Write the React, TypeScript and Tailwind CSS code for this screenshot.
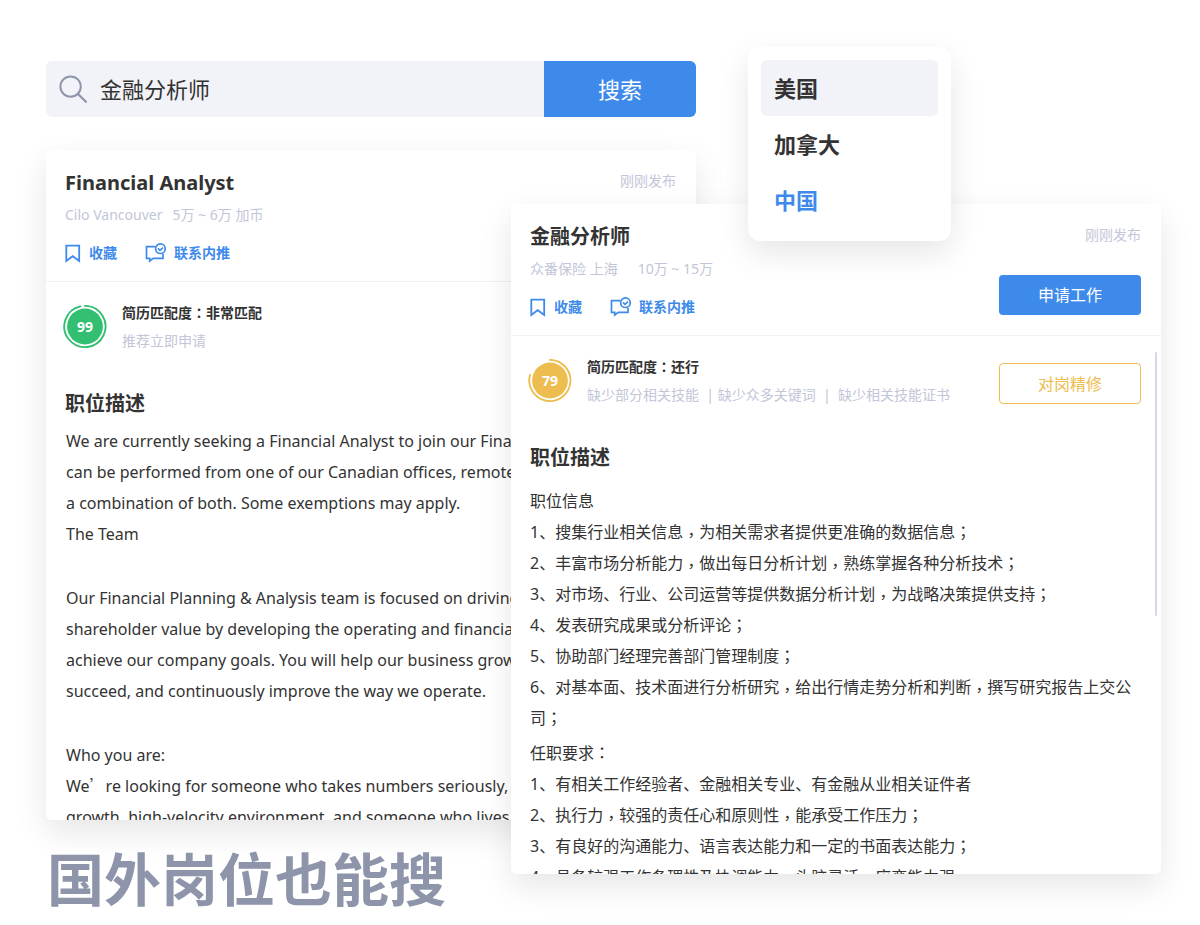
import type { ReactNode } from "react";

/** Sets full-width commas, colons and semicolons centred in the em box, and quotes at full width. */
function Cjk({ text }: { text: string }) {
  return (
    <>
      {text.split(/([，：；’])/).map((part, i) => {
        if (i % 2 === 0) return part;
        if (part === "’") {
          return (
            <span key={i} className="font-['Noto_Sans_CJK_SC',sans-serif] leading-none font-light">
              {part}
            </span>
          );
        }
        return (
          <span
            key={i}
            lang="zh-TW"
            className={
              part === "，"
                ? "align-[-3px] font-['Noto_Sans_CJK_TC',sans-serif] leading-none"
                : "font-['Noto_Sans_CJK_TC',sans-serif] leading-none"
            }
          >
            {part}
          </span>
        );
      })}
    </>
  );
}

function SearchIcon() {
  return (
    <svg className="size-7 shrink-0" viewBox="0 0 28 28" fill="none" stroke="#8e95ab" strokeWidth="2" aria-hidden="true">
      <circle cx="11.6" cy="11.6" r="10.2" />
      <path d="M18.8 18.8 27.5 27.4" strokeWidth="2.2" />
    </svg>
  );
}

function BookmarkIcon() {
  return (
    <svg className="h-5 w-4" viewBox="0 0 16 20" fill="none" stroke="currentColor" strokeWidth="1.8" aria-hidden="true">
      <path d="M1.3 2.6H14.2V18L7.7 13.2 1.3 18Z" />
    </svg>
  );
}

function ReferIcon() {
  return (
    <svg className="h-5 w-[21px]" viewBox="0 0 21 20" fill="none" stroke="currentColor" strokeWidth="1.7" aria-hidden="true">
      <path d="M10 3.6H1.5V15.4H4.7V18L8.2 15.4H18V11" />
      <circle cx="15.4" cy="5.7" r="4.8" />
      <path d="M12.9 5.4 15 7.4 18 4.6" strokeWidth="1.5" />
    </svg>
  );
}

function Score({ value, arc, color }: { value: number; arc: string; color: string }) {
  return (
    <div className="grid size-11 shrink-0 place-items-center">
      <svg className="col-start-1 row-start-1 size-11" viewBox="0 0 44 44" aria-hidden="true">
        <circle cx="22" cy="21.5" r="17.9" fill={color} />
        <path d={arc} fill="none" stroke={color} strokeWidth="1.9" strokeLinecap="round" />
      </svg>
      <span className="col-start-1 row-start-1 text-sm font-bold text-white">{value}</span>
    </div>
  );
}

type CardProps = {
  title: string;
  company: ReactNode;
  salary: string;
  match: string;
  hint: ReactNode;
  score: ReactNode;
  apply?: ReactNode;
  polish?: ReactNode;
  children: ReactNode;
};

function JobCard({ title, company, salary, match, hint, score, apply, polish, children }: CardProps) {
  return (
    <article className="relative h-[670px] overflow-hidden rounded-md bg-white">
      <header className="flex justify-between border-b border-[#f1f1f3] pt-[17px] pr-5 pb-[18px] pl-[19px]">
        <div>
          <h2 className="text-xl leading-8 font-bold">{title}</h2>
          <p className="mt-[6px] flex text-sm leading-5 whitespace-pre text-[#c2c6d8]">
            {company}
            <span>{salary}</span>
          </p>
          <div className="mt-[18px] flex gap-7 text-sm leading-5 font-bold text-[#3e8aeb]">
            <button type="button" className="flex items-center gap-2">
              <BookmarkIcon />
              收藏
            </button>
            <button type="button" className="flex items-center gap-2">
              <ReferIcon />
              联系内推
            </button>
          </div>
        </div>
        <div className="flex flex-col items-end pt-1">
          <time className="text-sm leading-5 text-[#c2c6d8]">刚刚发布</time>
          {apply}
        </div>
      </header>
      <div className="flex items-start justify-between pt-[17px] pr-5 pl-[17px]">
        <div className="flex items-center gap-[15px]">
          {score}
          <div className="text-sm leading-7">
            <p className="font-bold">
              <Cjk text={match} />
            </p>
            <p className="whitespace-pre text-[#c2c6d8]">{hint}</p>
          </div>
        </div>
        {polish}
      </div>
      <h3 className="mt-[33px] px-[19px] text-xl leading-8 font-bold">职位描述</h3>
      {children}
    </article>
  );
}

const englishBody = [
  [
    "We are currently seeking a Financial Analyst to join our Finance",
    "can be performed from one of our Canadian offices, remotely, or",
    "a combination of both. Some exemptions may apply.",
    "The Team",
  ],
  [
    "Our Financial Planning & Analysis team is focused on driving",
    "shareholder value by developing the operating and financial",
    "achieve our company goals. You will help our business grow,",
    "succeed, and continuously improve the way we operate.",
  ],
  [
    "Who you are:",
    "We’re looking for someone who takes numbers seriously,",
    "growth, high-velocity environment, and someone who lives",
  ],
];

const chineseBody = [
  {
    heading: "职位信息",
    items: [
      "1、搜集行业相关信息，为相关需求者提供更准确的数据信息；",
      "2、丰富市场分析能力，做出每日分析计划，熟练掌握各种分析技术；",
      "3、对市场、行业、公司运营等提供数据分析计划，为战略决策提供支持；",
      "4、发表研究成果或分析评论；",
      "5、协助部门经理完善部门管理制度；",
      "6、对基本面、技术面进行分析研究，给出行情走势分析和判断，撰写研究报告上交公司；",
    ],
  },
  {
    heading: "任职要求：",
    items: [
      "1、有相关工作经验者、金融相关专业、有金融从业相关证件者",
      "2、执行力，较强的责任心和原则性，能承受工作压力；",
      "3、有良好的沟通能力、语言表达能力和一定的书面表达能力；",
      "4、具备较强工作条理性及协调能力，头脑灵活，应变能力强。",
    ],
  },
];

const countries = ["美国", "加拿大", "中国"];

export default function App() {
  return (
    <main
      lang="zh-CN"
      className="grid grid-cols-[465fr_185fr_465fr] overflow-hidden bg-white pr-[39px] pb-4 pl-[46px] font-['Noto_Sans','Noto_Sans_CJK_SC',sans-serif] text-[#333333]"
    >
      <section className="col-span-2 col-start-1 row-start-1 min-w-0 pt-[61px]">
        <form className="flex h-14 overflow-hidden rounded-md bg-[#f2f3f9]" onSubmit={(e) => e.preventDefault()}>
          <label className="flex min-w-0 flex-1 items-center gap-[13px] pl-[13px]">
            <SearchIcon />
            <input
              type="text"
              aria-label="搜索职位"
              defaultValue="金融分析师"
              className="min-w-0 flex-1 bg-transparent text-[22px] leading-8 outline-none"
            />
          </label>
          <button type="submit" className="w-[152px] bg-[#3e8aeb] text-[22px] leading-8 text-white">
            搜索
          </button>
        </form>

        <div className="mt-[33px] rounded-md shadow-[0_12px_32px_rgba(0,0,0,0.1)]">
          <JobCard
            title="Financial Analyst"
            company={<span className="mr-[10px]">Cilo Vancouver</span>}
            salary="5万 ~ 6万 加币"
            match="简历匹配度：非常匹配"
            hint="推荐立即申请"
            score={<Score value={99} color="#32bf71" arc="M22 .9A20.6 20.6 0 1 1 17.4 1.4" />}
          >
            <div className="mt-[6px] flex flex-col gap-[33px] px-5 text-base leading-[31px] whitespace-nowrap">
              {englishBody.map((lines) => (
                <p key={lines[0]}>
                  {lines.map((line) => (
                    <span key={line} className="block">
                      <Cjk text={line} />
                    </span>
                  ))}
                </p>
              ))}
            </div>
          </JobCard>
        </div>

        <h1 className="mt-6 pl-px text-[57px] leading-[70px] font-bold whitespace-nowrap text-[#8e95ab]">
          国外岗位也能搜
        </h1>
      </section>

      <section className="relative col-span-2 col-start-2 row-start-1 min-w-0 pt-[204px]">
        <div className="rounded-md shadow-[0_12px_32px_rgba(0,0,0,0.1)]">
          <JobCard
            title="金融分析师"
            company={<span className="mr-5">众番保险 上海</span>}
            salary="10万 ~ 15万"
            match="简历匹配度：还行"
            hint="缺少部分相关技能  | 缺少众多关键词  |  缺少相关技能证书"
            score={<Score value={79} color="#edbd50" arc="M22 .9A20.6 20.6 0 1 1 2 15.9" />}
            apply={
              <button type="button" className="mt-[30px] h-10 w-[142px] rounded bg-[#3e8aeb] text-base text-white">
                申请工作
              </button>
            }
            polish={
              <button
                type="button"
                className="mt-[10px] h-[41px] w-[142px] shrink-0 rounded border border-[#edbd50] text-base text-[#edbd50]"
              >
                对岗精修
              </button>
            }
          >
            <div className="mt-3 flex flex-col gap-1 px-[19px] text-base leading-[31px]">
              {chineseBody.map((section) => (
                <div key={section.heading}>
                  <p>
                    <Cjk text={section.heading} />
                  </p>
                  <ul>
                    {section.items.map((item) => (
                      <li key={item}>
                        <Cjk text={item} />
                      </li>
                    ))}
                  </ul>
                </div>
              ))}
            </div>
            <div className="absolute top-[148px] right-1 h-[264px] w-[2px] rounded-full bg-[#d4d8ea]" />
          </JobCard>
        </div>

        <ul className="absolute top-[47px] left-[237px] w-[203px] rounded-xl bg-white p-[13px] shadow-[0_12px_32px_rgba(0,0,0,0.1)]">
          {countries.map((name) => (
            <li key={name}>
              <button
                type="button"
                className={
                  name === "美国"
                    ? "h-14 w-full rounded-md bg-[#f2f3f9] px-[13px] text-left text-[22px] font-bold"
                    : name === "中国"
                      ? "h-14 w-full rounded-md px-[13px] text-left text-[22px] font-bold text-[#3e8aeb]"
                      : "h-14 w-full rounded-md px-[13px] text-left text-[22px] font-bold"
                }
              >
                {name}
              </button>
            </li>
          ))}
        </ul>
      </section>
    </main>
  );
}
